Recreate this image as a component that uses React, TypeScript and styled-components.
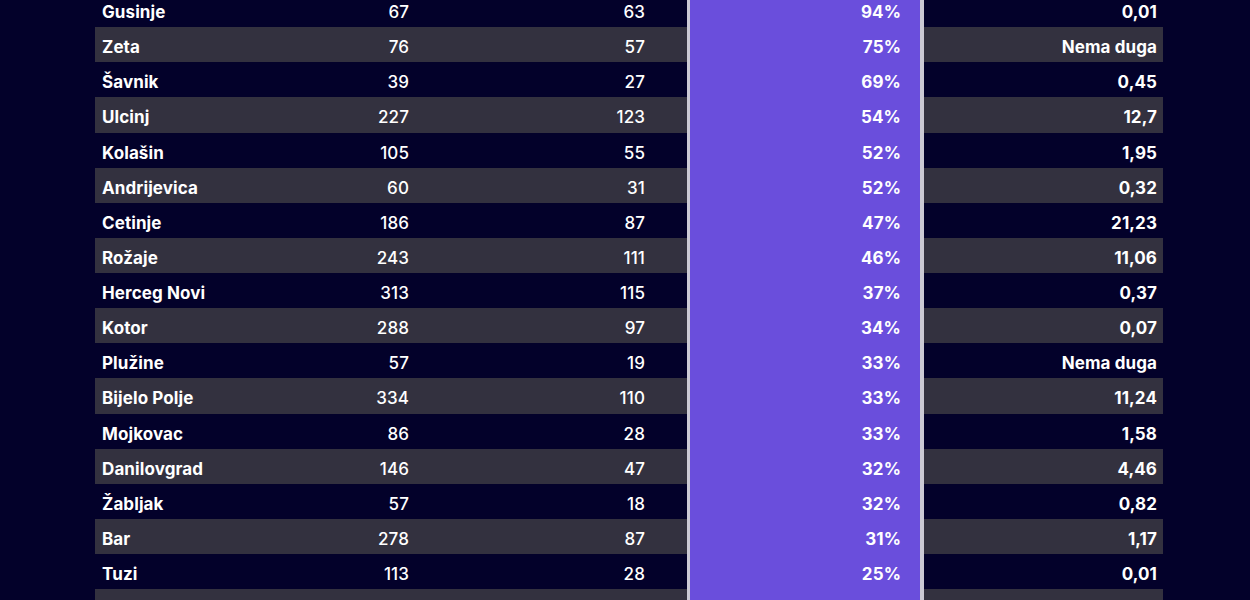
import React from "react";
import styled, { createGlobalStyle } from "styled-components";

const GlobalStyle = createGlobalStyle`
  html, body {
    margin: 0;
    padding: 0;
    background: #03012a;
    overflow: hidden;
  }
  body {
    font-family: Inter, "Noto Sans", "Liberation Sans", sans-serif;
    color: #ffffff;
  }
`;

const Page = styled.div`
  width: 1250px;
  height: 600px;
  overflow: hidden;
  background: #03012a;
`;

const Table = styled.div`
  width: 1068px;
  margin: -8px 0 0 95px;
  display: flex;
  flex-direction: column;
`;

const Row = styled.div<{ $striped: boolean }>`
  display: grid;
  grid-template-columns: 160px 161px 236px 35px 237px 239px;
  height: 35.14px;
  flex-shrink: 0;
  align-items: stretch;
  background: ${(p) => (p.$striped ? "#33313f" : "transparent")};
`;

const Cell = styled.div<{ $bold?: boolean; $align?: "left" | "right" }>`
  display: flex;
  align-items: center;
  justify-content: ${(p) => (p.$align === "left" ? "flex-start" : "flex-end")};
  padding: 5px 7px 0;
  font-size: 17px;
  font-weight: ${(p) => (p.$bold ? 700 : 500)};
  letter-spacing: 0.1px;
  white-space: nowrap;
`;

const Spacer = styled.div``;

const Highlight = styled(Cell)`
  background: #6a4edc;
  border-left: 3px solid #cbc9d4;
  border-right: 4px solid #cbc9d4;
  padding-right: 19px;
`;

const LastCell = styled(Cell)`
  padding-right: 6px;
`;

type Entry = [string, string, string, string, string];

const rows: Entry[] = [
  ["Gusinje", "67", "63", "94%", "0,01"],
  ["Zeta", "76", "57", "75%", "Nema duga"],
  ["Šavnik", "39", "27", "69%", "0,45"],
  ["Ulcinj", "227", "123", "54%", "12,7"],
  ["Kolašin", "105", "55", "52%", "1,95"],
  ["Andrijevica", "60", "31", "52%", "0,32"],
  ["Cetinje", "186", "87", "47%", "21,23"],
  ["Rožaje", "243", "111", "46%", "11,06"],
  ["Herceg Novi", "313", "115", "37%", "0,37"],
  ["Kotor", "288", "97", "34%", "0,07"],
  ["Plužine", "57", "19", "33%", "Nema duga"],
  ["Bijelo Polje", "334", "110", "33%", "11,24"],
  ["Mojkovac", "86", "28", "33%", "1,58"],
  ["Danilovgrad", "146", "47", "32%", "4,46"],
  ["Žabljak", "57", "18", "32%", "0,82"],
  ["Bar", "278", "87", "31%", "1,17"],
  ["Tuzi", "113", "28", "25%", "0,01"],
  ["", "", "", "", ""],
];

export default function App() {
  return (
    <Page>
      <GlobalStyle />
      <Table>
        {rows.map(([name, total, part, pct, debt], i) => (
          <Row key={i} $striped={i % 2 === 1}>
            <Cell $bold $align="left">
              {name}
            </Cell>
            <Cell>{total}</Cell>
            <Cell>{part}</Cell>
            <Spacer />
            <Highlight $bold>{pct}</Highlight>
            <LastCell $bold>{debt}</LastCell>
          </Row>
        ))}
      </Table>
    </Page>
  );
}
